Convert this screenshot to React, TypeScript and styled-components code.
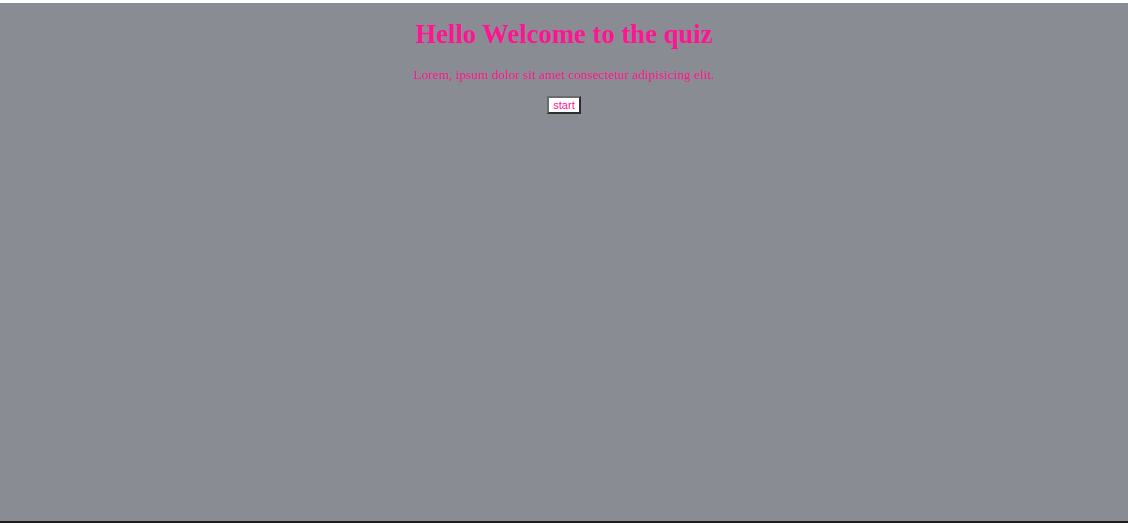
import styled, { createGlobalStyle } from 'styled-components';

const GlobalStyle = createGlobalStyle`
  html, body {
    margin: 0;
    padding: 0;
    background: #fff;
  }
`;

// ========== Layout ==========
const Page = styled.div`
  display: flow-root;
  margin-top: 3px;
  height: 518px;
  background: #898c93;
  border-bottom: 2px solid #1c1c1c;
  text-align: center;
  font-family: 'Liberation Serif', 'Times New Roman', serif;
  font-size: 13.33px;
  color: #ff1493;
`;

const Title = styled.h1`
  font-size: 26.67px;
  font-weight: 700;
  margin: 16px 0 17px;
`;

const Intro = styled.p`
  margin: 13.33px 0;
`;

const StartButton = styled.button`
  font-family: 'Liberation Sans', Arial, sans-serif;
  font-size: 11.1px;
  color: #ff1493;
  background: #fff;
  padding: 1px 4px;
  border: 2px solid;
  border-color: #6b6b6b #2e2e2e #2e2e2e #6b6b6b;
  cursor: pointer;
`;

function App() {
  return (
    <>
      <GlobalStyle />
      <Page>
        <Title>Hello Welcome to the quiz</Title>
        <Intro>Lorem, ipsum dolor sit amet consectetur adipisicing elit.</Intro>
        <StartButton>start</StartButton>
      </Page>
    </>
  );
}

export default App;
